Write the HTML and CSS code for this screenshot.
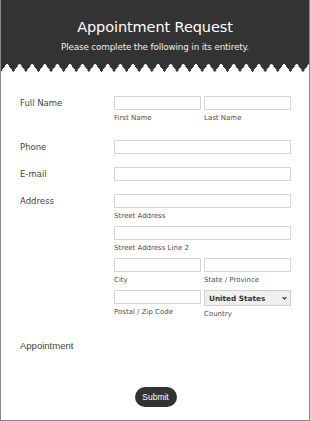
FILE: index.html
```html
<!DOCTYPE html>
<html lang="en">
<head>
    <meta charset="UTF-8">
    <meta name="viewport" content="width=device-width, initial-scale=1.0">
    <title>Appointment Request</title>
    <link rel="stylesheet" href="styles.css">
</head>
<body>
    <div class="page">
        <header class="head">
            <h1>Appointment Request</h1>
            <p>Please complete the following in its entirety.</p>
        </header>
        <div class="teeth"></div>
        <form class="form">
            <div class="row row-name">
                <label class="lbl">Full Name</label>
                <div class="pair">
                    <div class="field">
                        <input type="text">
                        <span class="sub">First Name</span>
                    </div>
                    <div class="field">
                        <input type="text">
                        <span class="sub">Last Name</span>
                    </div>
                </div>
            </div>
            <div class="row">
                <label class="lbl">Phone</label>
                <input type="text">
            </div>
            <div class="row">
                <label class="lbl">E-mail</label>
                <input type="text">
            </div>
            <div class="row row-address">
                <label class="lbl">Address</label>
                <div class="stack">
                    <div class="field">
                        <input type="text">
                        <span class="sub">Street Address</span>
                    </div>
                    <div class="field">
                        <input type="text">
                        <span class="sub">Street Address Line 2</span>
                    </div>
                    <div class="pair">
                        <div class="field">
                            <input type="text">
                            <span class="sub">City</span>
                        </div>
                        <div class="field">
                            <input type="text">
                            <span class="sub">State / Province</span>
                        </div>
                    </div>
                    <div class="pair">
                        <div class="field">
                            <input type="text">
                            <span class="sub">Postal / Zip Code</span>
                        </div>
                        <div class="field">
                            <div class="select-wrap">
                                <select>
                                    <option>United States</option>
                                </select>
                                <svg class="chevron" viewBox="0 0 8 6" width="5" height="4">
                                    <path d="M1 1.5 L4 4.5 L7 1.5" fill="none" stroke="#222" stroke-width="1.8"/>
                                </svg>
                            </div>
                            <span class="sub">Country</span>
                        </div>
                    </div>
                </div>
            </div>
            <div class="row row-appt">
                <label class="lbl lbl-plain">Appointment</label>
            </div>
            <div class="actions">
                <button type="button" class="submit">Submit</button>
            </div>
        </form>
    </div>
</body>
</html>
```

FILE: styles.css
```css
body {
    margin: 0;
    font-family: 'DejaVu Sans', sans-serif;
    background: #fff;
}
.page {
    width: 310px;
    height: 421px;
    box-sizing: border-box;
    border: 1px solid #8a8a8a;
    border-top: none;
    overflow: hidden;
}
.head {
    background: #333;
    color: #fff;
    text-align: center;
    height: 63px;
    padding-top: 17px;
    box-sizing: border-box;
}
.head h1 {
    margin: 0;
    font-weight: normal;
    font-size: 14.5px;
    line-height: 20px;
    letter-spacing: -0.1px;
}
.head p {
    margin: 4px 0 0;
    font-size: 8.8px;
    line-height: 12px;
    color: #eee;
    letter-spacing: -0.15px;
}
.teeth {
    height: 9px;
    background: conic-gradient(from -36deg at bottom, #333 72deg, transparent 0) 6px 0 / 12.6px 100%;
}
.form {
    padding: 24px 18px 0 19px;
}
.row {
    display: grid;
    grid-template-columns: 94px 177px;
    margin-bottom: 13px;
}
.row-name {
    margin-bottom: 17px;
}
.lbl {
    font-size: 8.5px;
    line-height: 14px;
    color: #444;
}
.lbl-plain {
    font-family: 'Liberation Sans', sans-serif;
    font-size: 9.5px;
}
.pair {
    display: grid;
    grid-template-columns: 1fr 1fr;
    gap: 3px;
}
.stack {
    display: flex;
    flex-direction: column;
    gap: 5px;
}
.field {
    display: flex;
    flex-direction: column;
}
input {
    height: 14px;
    width: 100%;
    box-sizing: border-box;
    border: 1px solid #d6d6d6;
    margin: 0;
    padding: 0 3px;
}
.select-wrap {
    position: relative;
}
select {
    appearance: none;
    -webkit-appearance: none;
    display: block;
    height: 16px;
    width: 100%;
    box-sizing: border-box;
    margin: 0;
    padding: 0 0 0 4px;
    font-family: 'DejaVu Sans', sans-serif;
    font-size: 7.3px;
    font-weight: 600;
    color: #333;
    background: #efefef;
    border: 1px solid #d0d0d0;
    border-radius: 0;
}
.chevron {
    position: absolute;
    right: 4px;
    top: 6px;
}
.sub {
    font-size: 7px;
    line-height: 9px;
    margin-top: 4px;
    color: #554d48;
}
.row-appt {
    margin-top: 20px;
}
.actions {
    display: flex;
    justify-content: center;
    margin-top: 34px;
}
.submit {
    font-family: 'Liberation Sans', sans-serif;
    font-size: 8.5px;
    color: #fff;
    background: #333;
    border: none;
    border-radius: 10px;
    width: 42px;
    height: 20px;
    padding: 0;
}
```
